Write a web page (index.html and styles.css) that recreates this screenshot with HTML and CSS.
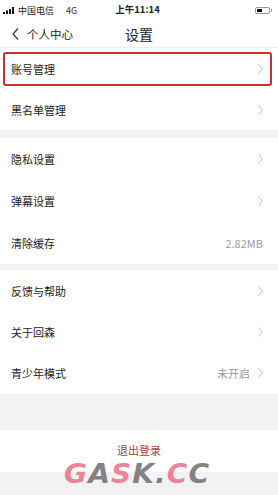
FILE: index.html
```html
<!DOCTYPE html>
<html lang="zh">
<head>
<meta charset="utf-8">
<link rel="stylesheet" href="styles.css">
</head>
<body>
<div class="page">
  <div class="status">
    <div class="carrier">
      <svg class="signal" width="12" height="7" viewBox="0 0 12 7"><rect x="0" y="5" width="2" height="2"/><rect x="3" y="3.5" width="2" height="3.5"/><rect x="6" y="2" width="2" height="5"/><rect x="9" y="0" width="2" height="7"/></svg>
      <span>中国电信</span><span class="net">4G</span>
    </div>
    <div class="time">上午11:14</div>
    <div class="batt-wrap">
      <span class="battery"><span class="level"></span></span><span class="nub"></span>
    </div>
  </div>
  <div class="nav">
    <div class="back">
      <svg width="7" height="12" viewBox="0 0 7 12"><polyline points="6,0.5 1,6 6,11.5" fill="none" stroke="#333" stroke-width="1.2"/></svg>
      <span>个人中心</span>
    </div>
    <div class="title">设置</div>
    <div></div>
  </div>

  <div class="group">
    <div class="row h41 marked"><span>账号管理</span><span class="right"><svg class="chev" width="5" height="10" viewBox="0 0 5 10"><polyline points="0.5,0.5 4.5,5 0.5,9.5" fill="none" stroke="#bdbdbd" stroke-width="1"/></svg></span></div>
    <div class="row h41"><span>黑名单管理</span><span class="right"><svg class="chev" width="5" height="10" viewBox="0 0 5 10"><polyline points="0.5,0.5 4.5,5 0.5,9.5" fill="none" stroke="#bdbdbd" stroke-width="1"/></svg></span></div>
  </div>
  <div class="gap g8"></div>
  <div class="group">
    <div class="row h42"><span>隐私设置</span><span class="right"><svg class="chev" width="5" height="10" viewBox="0 0 5 10"><polyline points="0.5,0.5 4.5,5 0.5,9.5" fill="none" stroke="#bdbdbd" stroke-width="1"/></svg></span></div>
    <div class="row h42"><span>弹幕设置</span><span class="right"><svg class="chev" width="5" height="10" viewBox="0 0 5 10"><polyline points="0.5,0.5 4.5,5 0.5,9.5" fill="none" stroke="#bdbdbd" stroke-width="1"/></svg></span></div>
    <div class="row h42"><span>清除缓存</span><span class="right"><span class="val">2.82MB</span></span></div>
  </div>
  <div class="gap g6"></div>
  <div class="group">
    <div class="row h41"><span>反馈与帮助</span><span class="right"><svg class="chev" width="5" height="10" viewBox="0 0 5 10"><polyline points="0.5,0.5 4.5,5 0.5,9.5" fill="none" stroke="#bdbdbd" stroke-width="1"/></svg></span></div>
    <div class="row h41"><span>关于回森</span><span class="right"><svg class="chev" width="5" height="10" viewBox="0 0 5 10"><polyline points="0.5,0.5 4.5,5 0.5,9.5" fill="none" stroke="#bdbdbd" stroke-width="1"/></svg></span></div>
    <div class="row h42"><span>青少年模式</span><span class="right"><span class="val">未开启</span><svg class="chev" width="5" height="10" viewBox="0 0 5 10"><polyline points="0.5,0.5 4.5,5 0.5,9.5" fill="none" stroke="#bdbdbd" stroke-width="1"/></svg></span></div>
  </div>
  <div class="gap g36"></div>
  <div class="logout"><span class="logout-text">退出登录</span></div>
  <div class="watermark"><span class="p">G</span><span class="d">A</span><span class="p">S</span><span class="d">K</span><span class="d">.</span><span class="p">C</span><span class="d">C</span></div>
</div>
</body>
</html>
```
FILE: styles.css
```css
* { box-sizing: border-box; }
html, body { margin: 0; padding: 0; }
body {
  background: #f2f2f4;
  font-family: "Noto Sans CJK SC", "Noto Sans", sans-serif;
  color: #222;
  width: 278px;
  height: 495px;
  overflow: hidden;
}
.page { position: relative; width: 278px; height: 495px; }
.status {
  height: 20px;
  background: #fff;
  display: grid;
  grid-template-columns: 1fr auto 1fr;
  align-items: center;
  padding: 0 6px 0 3px;
  font-size: 9px;
  line-height: 1;
}
.carrier { display: flex; align-items: center; gap: 2px; color: #222; }
.signal { fill: #111; margin-right: 1px; }
.net { margin-left: 10px; color: #333; }
.time { font-weight: 700; font-size: 9.5px; font-family: "Noto Sans CJK SC", sans-serif; }
.batt-wrap { display: flex; justify-content: flex-end; align-items: center; }
.battery {
  width: 15px; height: 7px;
  border: 1px solid #999;
  border-radius: 2px;
  padding: 1px;
  display: flex;
}
.level { width: 5px; background: #000; }
.nub { width: 1px; height: 3px; background: #999; margin-left: 1px; }
.nav {
  height: 28px;
  background: #fff;
  display: grid;
  grid-template-columns: 1fr auto 1fr;
  align-items: center;
  border-bottom: 1px solid #f6e9ea;
}
.back { display: flex; align-items: center; gap: 8px; padding-left: 12px; font-size: 11.5px; color: #222; }
.title { font-size: 14px; color: #222; }
.group { background: #fff; }
.row {
  position: relative;
  display: flex;
  align-items: center;
  justify-content: space-between;
  padding: 0 15px 0 11px;
  font-size: 11px;
}
.h41 { height: 41px; }
.h42 { height: 42px; }
.right { display: flex; align-items: center; gap: 8px; }
.val { color: #9a9a9a; font-size: 11px; }
.chev { display: block; }
.marked::after {
  content: "";
  position: absolute;
  left: 3px; right: 6px; top: 4px; bottom: 3px;
  border: 2.5px solid #cc2f2f;
  border-radius: 3px;
}
.gap { background: #f2f2f4; }
.g8 { height: 8px; }
.g6 { height: 6px; }
.g36 { height: 36px; }
.logout {
  height: 42px;
  background: #fff;
  display: flex;
  align-items: center;
  justify-content: center;
  padding-bottom: 2px;
}
.logout-text {
  color: #b43a3a;
  font-size: 11px;
  line-height: 13px;
}
.watermark {
  position: absolute;
  left: 64px;
  top: 461px;
  font-family: "DejaVu Sans", sans-serif;
  font-weight: 700;
  font-style: italic;
  font-size: 26px;
  letter-spacing: 1px;
  line-height: 1;
  transform: scaleX(1.08);
  transform-origin: left top;
  opacity: 0.85;
}
.watermark .p { color: #ec6f86; }
.watermark .d { color: #6f6f72; }
```
